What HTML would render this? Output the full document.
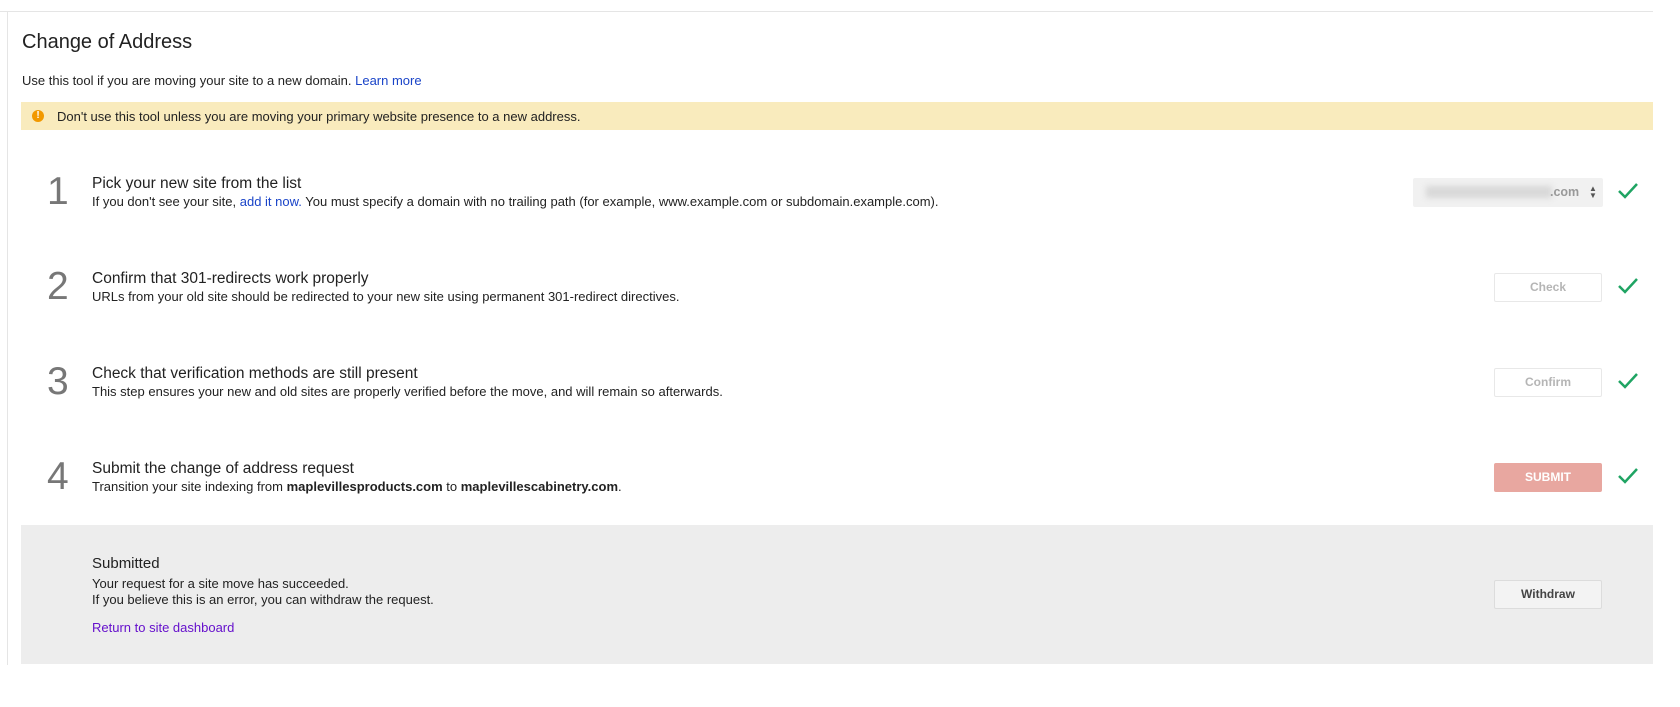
<!DOCTYPE html>
<html><head><meta charset="utf-8"><style>
body{margin:0;width:1680px;height:707px;background:#fff;font-family:"Liberation Sans",Arial,sans-serif;color:#222;position:relative;overflow:hidden}
.a{position:absolute;white-space:nowrap}
a{color:#1a44c8;text-decoration:none}
.num{font-size:39px;color:#777;left:47px;line-height:39px}
.t{left:92px;font-size:15.5px;color:#222}
.d{left:92px;font-size:13px;color:#222}
.btn{position:absolute;left:1494px;width:106px;height:27px;border:1px solid #e8e8e8;background:#fff;color:#b5b5b5;font-weight:bold;font-size:12px;text-align:center;line-height:27px;border-radius:2px}
.ck{position:absolute;left:1617px}
</style></head><body>
<div class="a" style="left:0;top:11px;width:1653px;height:1px;background:#e5e5e5"></div>
<div class="a" style="left:7px;top:12px;width:1px;height:653px;background:#e5e5e5"></div>
<div class="a" style="left:22px;top:31px;font-size:20px;color:#222">Change of Address</div>
<div class="a" style="left:22px;top:73px;font-size:13px">Use this tool if you are moving your site to a new domain. <a>Learn more</a></div>
<div class="a" style="left:21px;top:102px;width:1632px;height:28px;background:#f9ebbd"></div>
<div class="a" style="left:32px;top:110px;width:12px;height:12px;border-radius:50%;background:#f29900;color:#fff;font-size:10px;font-weight:bold;text-align:center;line-height:12px">!</div>
<div class="a" style="left:57px;top:109px;font-size:13px">Don't use this tool unless you are moving your primary website presence to a new address.</div>

<div class="a num" style="top:172px">1</div>
<div class="a t" style="top:175px">Pick your new site from the list</div>
<div class="a d" style="top:194px">If you don't see your site, <a>add it now.</a> You must specify a domain with no trailing path (for example, www.example.com or subdomain.example.com).</div>
<div class="a" style="left:1413px;top:178px;width:190px;height:29px;background:#f1f1f1;border-radius:2px"></div>
<div class="a" style="left:1426px;top:186px;width:126px;height:12px;background:#d8d8d8;filter:blur(3px)"></div>
<div class="a" style="left:1550px;top:185px;font-size:12.5px;font-weight:bold;color:#999">.com</div>
<div class="a" style="left:1589px;top:185px;font-size:8px;line-height:7px;color:#555">▲<br>▼</div>

<div class="a num" style="top:267px">2</div>
<div class="a t" style="top:270px">Confirm that 301-redirects work properly</div>
<div class="a d" style="top:289px">URLs from your old site should be redirected to your new site using permanent 301-redirect directives.</div>
<div class="btn" style="top:273px">Check</div>

<div class="a num" style="top:362px">3</div>
<div class="a t" style="top:365px">Check that verification methods are still present</div>
<div class="a d" style="top:384px">This step ensures your new and old sites are properly verified before the move, and will remain so afterwards.</div>
<div class="btn" style="top:368px">Confirm</div>

<div class="a num" style="top:457px">4</div>
<div class="a t" style="top:460px">Submit the change of address request</div>
<div class="a d" style="top:479px">Transition your site indexing from <b>maplevillesproducts.com</b> to <b>maplevillescabinetry.com</b>.</div>
<div class="btn" style="top:463px;background:#e8a7a0;border-color:#e8a7a0;color:#fff">SUBMIT</div>

<svg class="ck" style="top:181px" width="22" height="20" viewBox="0 0 22 20"><path d="M2 10 L8 16 L20 3" fill="none" stroke="#1fa463" stroke-width="2.5"/></svg>
<svg class="ck" style="top:276px" width="22" height="20" viewBox="0 0 22 20"><path d="M2 10 L8 16 L20 3" fill="none" stroke="#1fa463" stroke-width="2.5"/></svg>
<svg class="ck" style="top:371px" width="22" height="20" viewBox="0 0 22 20"><path d="M2 10 L8 16 L20 3" fill="none" stroke="#1fa463" stroke-width="2.5"/></svg>
<svg class="ck" style="top:466px" width="22" height="20" viewBox="0 0 22 20"><path d="M2 10 L8 16 L20 3" fill="none" stroke="#1fa463" stroke-width="2.5"/></svg>

<div class="a" style="left:21px;top:525px;width:1632px;height:139px;background:#ededed"></div>
<div class="a" style="left:92px;top:555px;font-size:15px">Submitted</div>
<div class="a" style="left:92px;top:576px;font-size:13px;line-height:16px">Your request for a site move has succeeded.<br>If you believe this is an error, you can withdraw the request.</div>
<div class="a" style="left:92px;top:620px;font-size:13px;color:#6611cc">Return to site dashboard</div>
<div class="btn" style="top:580px;background:#f3f3f3;border-color:#dcdcdc;color:#444">Withdraw</div>
</body></html>
